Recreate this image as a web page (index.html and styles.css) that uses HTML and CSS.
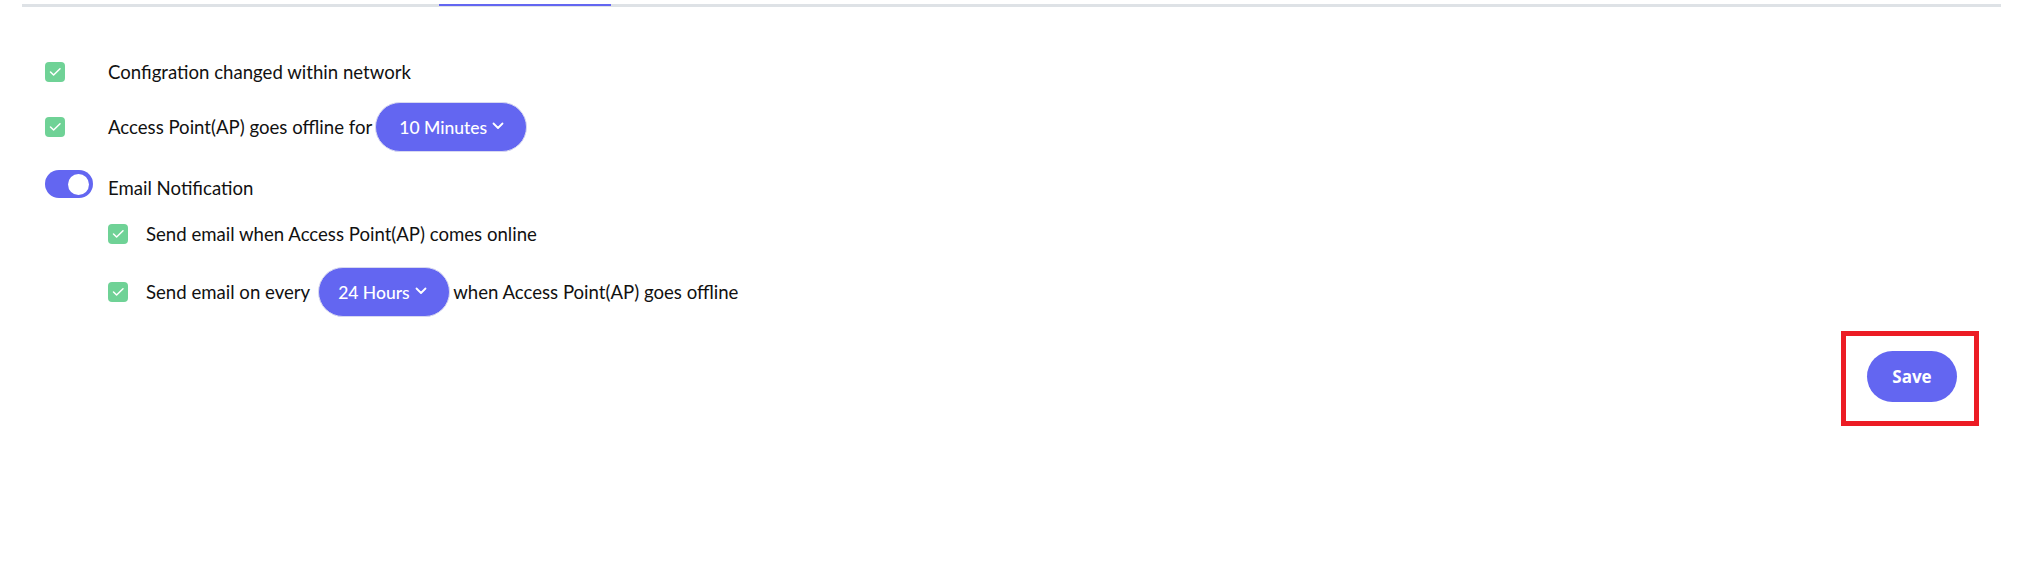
FILE: index.html
```html
<!DOCTYPE html>
<html lang="en">
<head>
<meta charset="utf-8">
<title>Notification settings</title>
<link rel="stylesheet" href="styles.css">
</head>
<body>
<div class="tabs"><span class="tab-active"></span></div>
<div class="settings">
  <div class="row row-1">
    <span class="ctrl"><span class="check"><svg viewBox="0 0 20 20" width="20" height="20"><polyline points="5.5,10 8.6,13 15,6.8" fill="none" stroke="#fff" stroke-width="1.5" stroke-linecap="round" stroke-linejoin="round"/></svg></span></span>
    <span class="label">Configration changed within network</span>
  </div>
  <div class="row row-2">
    <span class="ctrl"><span class="check"><svg viewBox="0 0 20 20" width="20" height="20"><polyline points="5.5,10 8.6,13 15,6.8" fill="none" stroke="#fff" stroke-width="1.5" stroke-linecap="round" stroke-linejoin="round"/></svg></span></span>
    <span class="label">Access Point(AP) goes offline for</span>
    <button class="select select-min">10 Minutes<svg class="chev" viewBox="0 0 12 8" width="12" height="8"><polyline points="1.5,1.5 6,6 10.5,1.5" fill="none" stroke="#fff" stroke-width="1.8" stroke-linecap="round" stroke-linejoin="round"/></svg></button>
  </div>
  <div class="row row-3">
    <span class="ctrl"><span class="toggle"><span class="knob"></span></span></span>
    <span class="label label-low">Email Notification</span>
  </div>
  <div class="row sub row-4">
    <span class="check"><svg viewBox="0 0 20 20" width="20" height="20"><polyline points="5.5,10 8.6,13 15,6.8" fill="none" stroke="#fff" stroke-width="1.5" stroke-linecap="round" stroke-linejoin="round"/></svg></span>
    <span class="label">Send email when Access Point(AP) comes online</span>
  </div>
  <div class="row sub row-5">
    <span class="check"><svg viewBox="0 0 20 20" width="20" height="20"><polyline points="5.5,10 8.6,13 15,6.8" fill="none" stroke="#fff" stroke-width="1.5" stroke-linecap="round" stroke-linejoin="round"/></svg></span>
    <span class="label">Send email on every</span>
    <button class="select select-hours">24 Hours<svg class="chev" viewBox="0 0 12 8" width="12" height="8"><polyline points="1.5,1.5 6,6 10.5,1.5" fill="none" stroke="#fff" stroke-width="1.8" stroke-linecap="round" stroke-linejoin="round"/></svg></button>
    <span class="label after">when Access Point(AP) goes offline</span>
  </div>
  <div class="actions">
    <div class="save-wrap">
      <button class="save">Save</button>
      <span class="highlight"></span>
    </div>
  </div>
</div>
</body>
</html>
```
FILE: styles.css
```css
* { box-sizing: border-box; }
html, body { margin: 0; padding: 0; background: #fff; }
body {
  font-family: "Lato", "Liberation Sans", sans-serif;
  color: #111;
  width: 2044px;
  height: 586px;
  overflow: hidden;
}
.tabs {
  position: relative;
  height: 7px;
  margin: 0 43px 0 22px;
  border-bottom: 3px solid #dee2e6;
}
.tab-active {
  position: absolute;
  left: 417px;
  top: 4px;
  width: 172px;
  height: 2px;
  background: #6366f1;
}
.settings {
  padding: 40px 0 0 45px;
}
.row {
  display: flex;
  align-items: center;
  height: 50px;
}
.row-2 { margin-top: 5px; }
.row-3 { margin-top: 7px; }
.row-4 { margin-top: 0; }
.row-5 { margin-top: 8px; }
.sub { padding-left: 63px; }
.sub .check { margin-right: 18px; }
.ctrl {
  width: 63px;
  display: flex;
  align-items: center;
}
.check {
  width: 20px;
  height: 20px;
  border-radius: 4px;
  background: #6fd296;
  display: inline-flex;
}
.toggle {
  width: 48px;
  height: 28px;
  border-radius: 14px;
  background: #6366f1;
  display: flex;
  align-items: center;
  justify-content: flex-end;
  padding-right: 4px;
}
.knob {
  width: 21px;
  height: 21px;
  border-radius: 50%;
  background: #fff;
}
.label {
  font-size: 18.6px;
  line-height: 22px;
  white-space: nowrap;
}
.label-low { margin-top: 8px; }
.select {
  display: inline-flex;
  align-items: center;
  height: 50px;
  border: 1px solid #d8d9f0;
  border-radius: 25px;
  background: #6366f1;
  color: #fff;
  font-family: "Lato", "Liberation Sans", sans-serif;
  font-size: 17.5px;
  font-weight: 500;
  margin: 0;
  cursor: pointer;
}
.select-min { width: 152px; padding: 0 0 0 23px; margin-left: 3px; }
.select-hours { width: 132px; padding: 0 0 0 19px; margin-left: 8px; margin-right: 3px; }
.chev { margin-left: 5px; margin-top: -2px; }
.actions {
  display: flex;
  justify-content: flex-end;
  padding-right: 87px;
  margin-top: 34px;
}
.save-wrap { position: relative; }
.save {
  width: 90px;
  height: 51px;
  border: none;
  border-radius: 26px;
  background: #6366f1;
  color: #fff;
  font-family: "Open Sans", "Liberation Sans", sans-serif;
  font-weight: 700;
  font-size: 17px;
  cursor: pointer;
}
.highlight {
  position: absolute;
  left: -26px;
  top: -20px;
  width: 138px;
  height: 95px;
  border: 5px solid #ec1c24;
}
```
